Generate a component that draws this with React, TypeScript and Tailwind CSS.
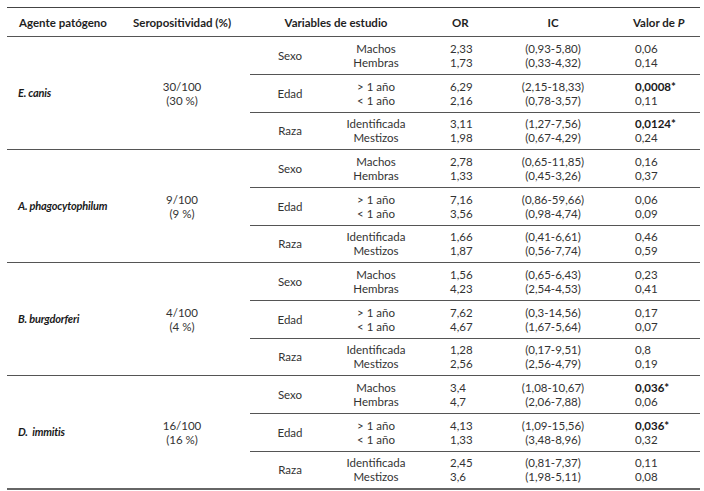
import React from 'react';

type Sub = {
    label: string;
    vals: [string, string];
    or: [string, string];
    ic: [string, string];
    p: [string, string];
    bold?: [boolean, boolean];
};

type Group = {
    agent: string;
    count: string;
    pct: string;
    subs: Sub[];
};

const groups: Group[] = [
    {
        agent: 'E. canis',
        count: '30/100',
        pct: '(30 %)',
        subs: [
            { label: 'Sexo', vals: ['Machos', 'Hembras'], or: ['2,33', '1,73'], ic: ['(0,93-5,80)', '(0,33-4,32)'], p: ['0,06', '0,14'] },
            { label: 'Edad', vals: ['> 1 año', '< 1 año'], or: ['6,29', '2,16'], ic: ['(2,15-18,33)', '(0,78-3,57)'], p: ['0,0008*', '0,11'], bold: [true, false] },
            { label: 'Raza', vals: ['Identificada', 'Mestizos'], or: ['3,11', '1,98'], ic: ['(1,27-7,56)', '(0,67-4,29)'], p: ['0,0124*', '0,24'], bold: [true, false] },
        ],
    },
    {
        agent: 'A. phagocytophilum',
        count: '9/100',
        pct: '(9 %)',
        subs: [
            { label: 'Sexo', vals: ['Machos', 'Hembras'], or: ['2,78', '1,33'], ic: ['(0,65-11,85)', '(0,45-3,26)'], p: ['0,16', '0,37'] },
            { label: 'Edad', vals: ['> 1 año', '< 1 año'], or: ['7,16', '3,56'], ic: ['(0,86-59,66)', '(0,98-4,74)'], p: ['0,06', '0,09'] },
            { label: 'Raza', vals: ['Identificada', 'Mestizos'], or: ['1,66', '1,87'], ic: ['(0,41-6,61)', '(0,56-7,74)'], p: ['0,46', '0,59'] },
        ],
    },
    {
        agent: 'B. burgdorferi',
        count: '4/100',
        pct: '(4 %)',
        subs: [
            { label: 'Sexo', vals: ['Machos', 'Hembras'], or: ['1,56', '4,23'], ic: ['(0,65-6,43)', '(2,54-4,53)'], p: ['0,23', '0,41'] },
            { label: 'Edad', vals: ['> 1 año', '< 1 año'], or: ['7,62', '4,67'], ic: ['(0,3-14,56)', '(1,67-5,64)'], p: ['0,17', '0,07'] },
            { label: 'Raza', vals: ['Identificada', 'Mestizos'], or: ['1,28', '2,56'], ic: ['(0,17-9,51)', '(2,56-4,79)'], p: ['0,8', '0,19'] },
        ],
    },
    {
        agent: 'D.  immitis',
        count: '16/100',
        pct: '(16 %)',
        subs: [
            { label: 'Sexo', vals: ['Machos', 'Hembras'], or: ['3,4', '4,7'], ic: ['(1,08-10,67)', '(2,06-7,88)'], p: ['0,036*', '0,06'], bold: [true, false] },
            { label: 'Edad', vals: ['> 1 año', '< 1 año'], or: ['4,13', '1,33'], ic: ['(1,09-15,56)', '(3,48-8,96)'], p: ['0,036*', '0,32'], bold: [true, false] },
            { label: 'Raza', vals: ['Identificada', 'Mestizos'], or: ['2,45', '3,6'], ic: ['(0,81-7,37)', '(1,98-5,11)'], p: ['0,11', '0,08'] },
        ],
    },
];

function SubRow({ sub, last }: { sub: Sub; last: boolean }) {
    const b = sub.bold || [false, false];
    return (
        <div className={`flex items-center ${last ? 'h-[36px]' : 'h-[38px] border-b border-[#555]'}`}>
            <div className="w-[80px] text-center">{sub.label}</div>
            <div className="w-[92px] flex flex-col items-center leading-[14px]">
                <span>{sub.vals[0]}</span>
                <span>{sub.vals[1]}</span>
            </div>
            <div className="w-[72px] pl-[28px] flex flex-col leading-[14px]">
                <span>{sub.or[0]}</span>
                <span>{sub.or[1]}</span>
            </div>
            <div className="w-[118px] flex flex-col items-center leading-[14px]">
                <span>{sub.ic[0]}</span>
                <span>{sub.ic[1]}</span>
            </div>
            <div className="flex-1 pl-[23px] flex flex-col leading-[14px]">
                <span className={b[0] ? 'font-bold text-[#1a1a1a]' : ''}>{sub.p[0]}</span>
                <span className={b[1] ? 'font-bold text-[#1a1a1a]' : ''}>{sub.p[1]}</span>
            </div>
        </div>
    );
}

export default function App() {
    return (
        <div className="w-[704px] h-[491px] bg-white pt-[7px] pl-[7px] text-[11.5px] text-[#333]" style={{ fontFamily: 'Lato, "Open Sans", sans-serif' }}>
            <div className="w-[693px] border-t border-[#444] border-b-2 border-b-[#666]">
                <div className="flex items-center h-[29px] pt-[2px] border-b border-[#555] font-bold text-[#1f1f1f]">
                    <div className="w-[107px] pl-[12px]">Agente patógeno</div>
                    <div className="w-[136px] text-center">Seropositividad (%)</div>
                    <div className="w-[172px] text-center">Variables de estudio</div>
                    <div className="w-[72px] pl-[30px]">OR</div>
                    <div className="w-[118px] text-center">IC</div>
                    <div className="flex-1 pl-[21px]">
                        Valor de <span className="italic">P</span>
                    </div>
                </div>
                {groups.map((g, i) => (
                    <div key={g.agent} className={`flex ${i < groups.length - 1 ? 'border-b border-[#555]' : ''}`}>
                        <div className="w-[107px] pl-[11px] flex items-center font-bold italic whitespace-pre text-[11px] tracking-[-0.2px] text-[#1a1a1a]">{g.agent}</div>
                        <div className="w-[136px] flex flex-col items-center justify-center leading-[14px] pt-[2px]">
                            <span>{g.count}</span>
                            <span>{g.pct}</span>
                        </div>
                        <div className="flex-1 flex flex-col">
                            {g.subs.map((s, j) => (
                                <SubRow key={s.label} sub={s} last={j === g.subs.length - 1} />
                            ))}
                        </div>
                    </div>
                ))}
            </div>
        </div>
    );
}
